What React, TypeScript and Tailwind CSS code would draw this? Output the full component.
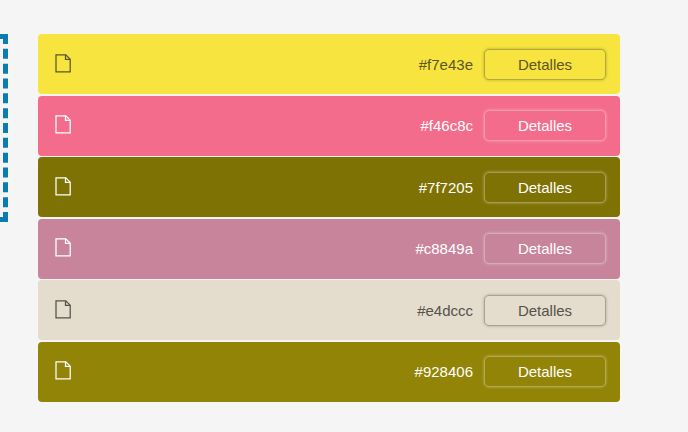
type Swatch = { hex: string; bg: string; ink: string; button: string };

const light = 'border-white/30 shadow-[0_0_3px_rgba(255,255,255,0.4)]';
const dark = 'border-[#504d40]/40 shadow-[0_0_3px_rgba(60,55,30,0.35)]';

const swatches: Swatch[] = [
  { hex: '#f7e43e', bg: 'bg-[#f7e43e]', ink: 'text-[#5d5626]', button: dark },
  { hex: '#f46c8c', bg: 'bg-[#f46c8c]', ink: 'text-white', button: light },
  { hex: '#7f7205', bg: 'bg-[#7f7205]', ink: 'text-white', button: light },
  { hex: '#c8849a', bg: 'bg-[#c8849a]', ink: 'text-white', button: light },
  { hex: '#e4dccc', bg: 'bg-[#e4dccc]', ink: 'text-[#55524c]', button: dark },
  { hex: '#928406', bg: 'bg-[#928406]', ink: 'text-white', button: light },
];

function PageIcon() {
  return (
    <svg width="16" height="19" viewBox="0 0 16 19" fill="none" stroke="currentColor" strokeWidth="1.25" className="block">
      <path d="M1 0.8H10.8L15.2 5.2V17.9H1Z" />
      <path d="M10.5 0.8V5.4H15.2" />
    </svg>
  );
}

export default function App() {
  return (
    <main className="flex h-[432px] w-[688px] items-start overflow-hidden bg-[#f5f5f5] pt-[34px] font-['Liberation_Sans',Arial,sans-serif] text-[15px]">
      <aside className="flex h-[188px] w-2 shrink-0 justify-end overflow-hidden">
        <div className="h-[188px] w-[200px] shrink-0 border-[5px] border-dashed border-[#0c7bb0]" />
      </aside>
      <ul className="mt-[0.3px] ml-[30px] flex w-[582px] flex-col gap-[1.5px]">
        {swatches.map((s) => (
          <li key={s.hex} className={`flex h-[60px] items-center rounded pr-[14px] pl-[17px] ${s.bg} ${s.ink}`}>
            <span className="mb-[2px]">
              <PageIcon />
            </span>
            <span className="mr-[11px] ml-auto pt-[0.8px] leading-5">{s.hex}</span>
            <button className={`h-[31px] w-[122px] rounded-[5px] border pt-[0.8px] leading-5 ${s.button}`}>Detalles</button>
          </li>
        ))}
      </ul>
    </main>
  );
}
